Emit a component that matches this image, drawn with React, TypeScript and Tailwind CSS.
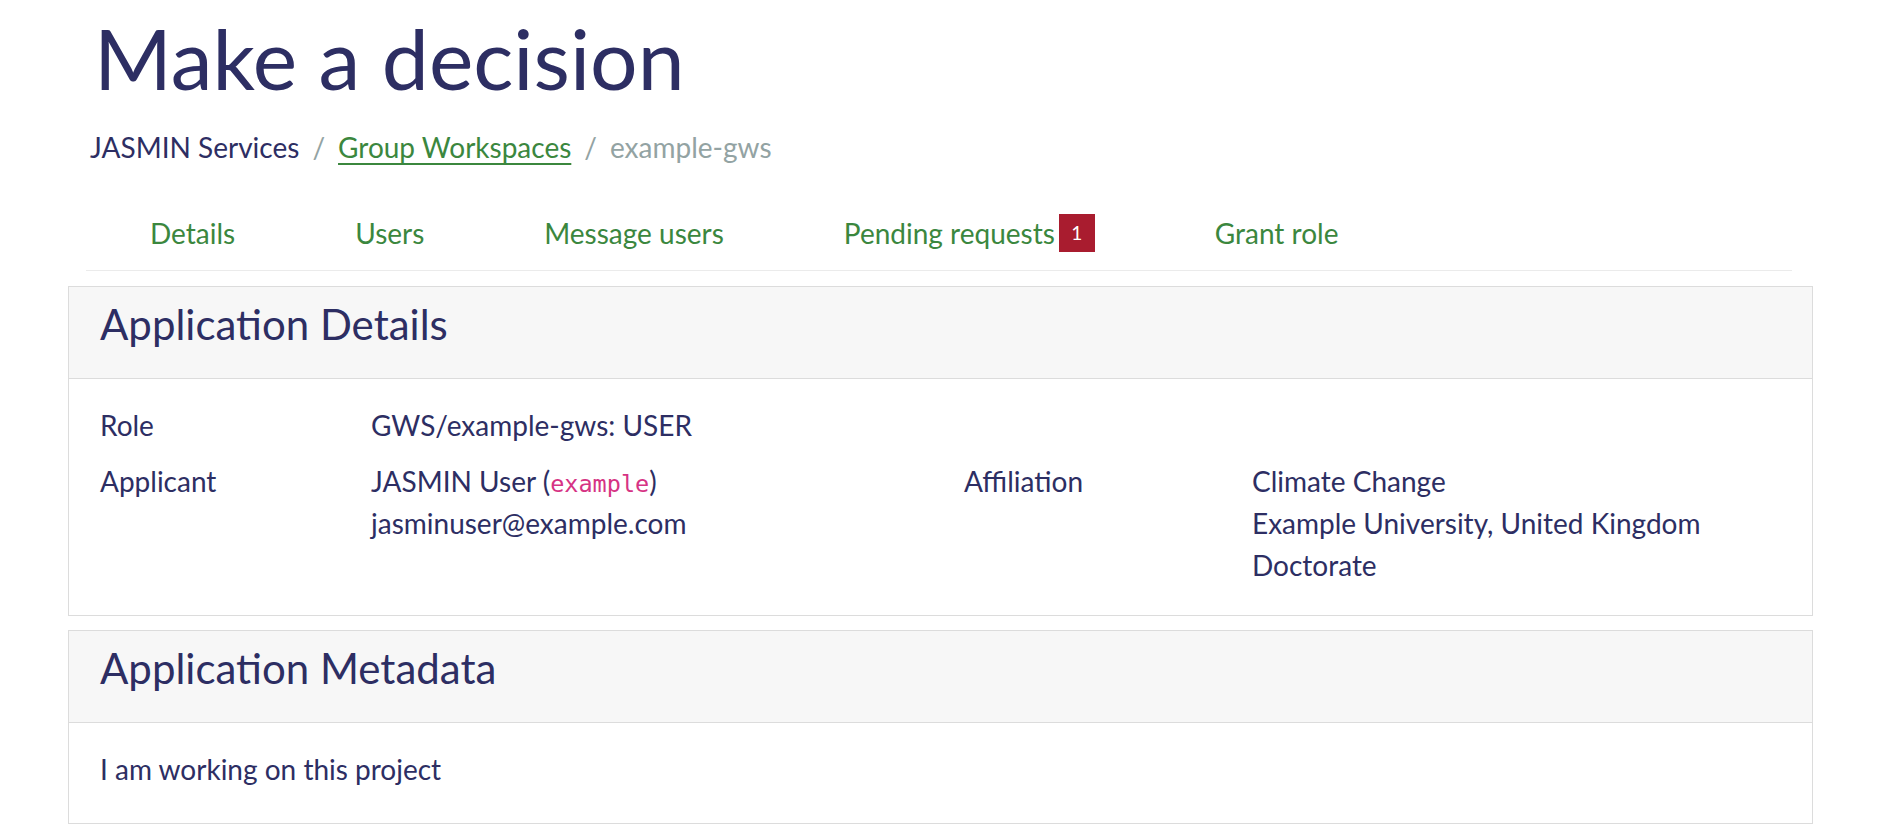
import React from 'react';

const navy = 'text-[#2d2e63]';

function Card({ title, children }: { title: string; children: React.ReactNode }) {
  return (
    <div className="border border-[#dcdcdc] bg-white">
      <div className="bg-[#f7f7f7] border-b border-[#dcdcdc] px-[31px] pt-[12px] h-[92px]">
        <h2 className={`text-[42px] ${navy} leading-[1.2]`}>{title}</h2>
      </div>
      {children}
    </div>
  );
}

export default function App() {
  const tabs = ['Details', 'Users', 'Message users', 'Pending requests', 'Grant role'];
  return (
    <div className="min-h-screen bg-white font-['Lato',sans-serif] text-[28px] leading-[42px]">
      <div className="px-[68px]">
        <h1 className={`pl-[26px] pt-[8px] text-[84px] leading-[1.2] ${navy}`}>Make a decision</h1>

        {/* breadcrumb */}
        <nav className="pl-[22px] mt-[17px] flex items-center gap-[13px]">
          <span className={navy}>JASMIN Services</span>
          <span className="text-[#93a3a3]">/</span>
          <a className="text-[#3b873e] underline underline-offset-[5px] decoration-[1.5px]">Group Workspaces</a>
          <span className="text-[#93a3a3]">/</span>
          <span className="text-[#93a3a3]">example-gws</span>
        </nav>

        {/* tabs */}
        <div className="ml-[18px] mr-[21px] mt-[44px] border-b border-[#ebebeb] flex pb-[16px]">
          {tabs.map((t, i) => (
            <div key={t} className={`flex items-center h-[42px] text-[#3b873e] ${i === 0 ? 'pl-[64px]' : 'pl-[60px]'} pr-[60px]`}>
              {t}
              {t === 'Pending requests' && (
                <span className="ml-[4px] bg-[#a91c2f] text-white text-[19px] leading-none w-[36px] h-[38px] flex items-center justify-center">1</span>
              )}
            </div>
          ))}
        </div>

        <div className="mt-[15px] flex flex-col gap-[14px]">
          <Card title="Application Details">
            <div className={`px-[31px] pt-[25px] pb-[29px] ${navy}`}>
              <div className="flex">
                <div className="w-[271px]">Role</div>
                <div>GWS/example-gws: USER</div>
              </div>
              <div className="flex mt-[14px]">
                <div className="w-[271px]">Applicant</div>
                <div className="w-[593px]">
                  <div className="h-[42px]">
                    JASMIN User (<code className="text-[#d63384] font-['DejaVu_Sans_Mono',monospace] text-[23.5px] leading-none">example</code>)
                  </div>
                  <div>jasminuser@example.com</div>
                </div>
                <div className="w-[288px]">Affiliation</div>
                <div>
                  <div>Climate Change</div>
                  <div>Example University, United Kingdom</div>
                  <div>Doctorate</div>
                </div>
              </div>
            </div>
          </Card>
          <Card title="Application Metadata">
            <div className={`px-[31px] pt-[25px] pb-[33px] ${navy}`}>I am working on this project</div>
          </Card>
        </div>
      </div>
    </div>
  );
}
